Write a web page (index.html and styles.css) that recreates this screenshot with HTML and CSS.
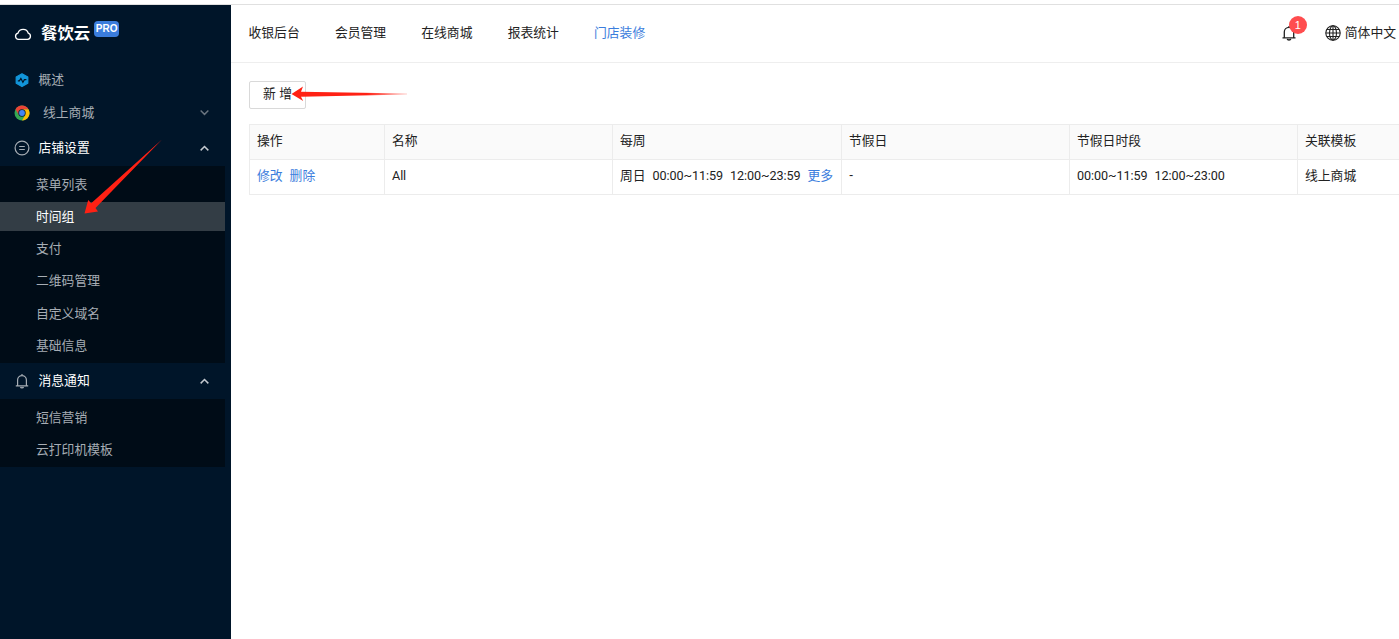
FILE: index.html
```
<!DOCTYPE html>
<html lang="zh-CN">
<head>
  <meta charset="UTF-8">
  <title>餐饮云</title>
  <link rel="stylesheet" href="styles.css">
</head>
<body>
  <div class="layout">
    <aside class="sidebar">
      <div class="brand">
        <svg class="brand-icon" viewBox="0 0 18 14"><path d="M4.600 12.400h9a3.200 3.200 0 0 0 .7-6.200A5.400 5.400 0 0 0 4 6.100a3.200 3.200 0 0 0 .6 6.300z" fill="none" stroke="#fff" stroke-width="1.300"/></svg>
        <span class="brand-name">餐饮云</span>
        <span class="brand-tag">PRO</span>
      </div>
      <nav class="menu">
        <div class="menu-item overview">
          <svg class="menu-icon" viewBox="0 0 16 16"><path d="M8 1.800 13.800 5v6.200L8 14.600 2.200 11.200V5z" fill="#1296db" stroke="#1296db" stroke-width="1.200" stroke-linejoin="round"/><path d="M3.800 8.800h1.600l1.500-2.400 2 3.800 1.500-2.600h2" fill="none" stroke="#001529" stroke-width="1.200"/></svg>
          <span>概述</span>
        </div>
        <div class="menu-item mall">
          <svg class="menu-icon" viewBox="0 0 16 16"><circle cx="8" cy="8" r="7.500" fill="#34a853"/><path d="M8 4.250h6.500A7.500 7.500 0 0 1 8 15.500L11.250 9.900z" fill="#fbbc05"/><path d="M8 4.250h6.500a7.500 7.500 0 0 0-13 0L4.750 9.900z" fill="#ea4335"/><circle cx="8" cy="8" r="3.700" fill="#0b1f30"/><circle cx="8" cy="8" r="2.900" fill="#4285f4"/></svg>
          <span>线上商城</span>
          <svg class="caret dim" viewBox="0 0 10 10"><path d="M1.500 3.200 5 6.700l3.500-3.500"/></svg>
        </div>
        <div class="menu-item open">
          <svg class="menu-icon" viewBox="0 0 16 16"><g fill="none" stroke="#a6adb4"><circle cx="8" cy="8" r="6.900" stroke-width="1.200"/><path d="M5.200 6.500h5.600M5.200 9.500h5.600" stroke-width="1.100"/></g></svg>
          <span>店铺设置</span>
          <svg class="caret" viewBox="0 0 10 10"><path d="M1.500 6.700 5 3.200l3.500 3.500"/></svg>
        </div>
        <ul class="submenu">
          <li>菜单列表</li>
          <li class="active">时间组</li>
          <li>支付</li>
          <li>二维码管理</li>
          <li>自定义域名</li>
          <li>基础信息</li>
        </ul>
        <div class="menu-item open">
          <svg class="menu-icon" viewBox="0 0 16 16"><path d="M1.800 12.900h12.400M3.600 12.900V7a4.400 4.400 0 0 1 8.800 0v5.900M8 2.600V1M6.500 14c.3 1.200 2.700 1.200 3 0" fill="none" stroke="#a6adb4" stroke-width="1.200"/></svg>
          <span>消息通知</span>
          <svg class="caret" viewBox="0 0 10 10"><path d="M1.500 6.700 5 3.200l3.500 3.500"/></svg>
        </div>
        <ul class="submenu">
          <li>短信营销</li>
          <li>云打印机模板</li>
        </ul>
      </nav>
    </aside>

    <main class="main">
      <header class="header">
        <nav class="tabs">
          <a>收银后台</a>
          <a>会员管理</a>
          <a>在线商城</a>
          <a>报表统计</a>
          <a class="current">门店装修</a>
        </nav>
        <div class="tools">
          <div class="notice">
            <svg viewBox="0 0 16 16"><path d="M1.500 12.900h13M3.300 12.900V7a4.700 4.700 0 0 1 9.400 0v5.900M8 2.600V1M6.200 14c.3 1.300 3.300 1.300 3.600 0" fill="none" stroke="#222" stroke-width="1.300"/></svg>
            <span class="badge">1</span>
          </div>
          <svg class="globe" viewBox="0 0 16 16"><g fill="none" stroke="#222" stroke-width="1.100"><circle cx="8" cy="8" r="7.200"/><ellipse cx="8" cy="8" rx="3.500" ry="7.200"/><path d="M8 .8v14.400M.8 8h14.400M1.800 4.500h12.400M1.800 11.500h12.400"/></g></svg>
          <span class="lang">简体中文</span>
        </div>
      </header>

      <section class="content">
        <button class="add">新 增</button>
        <div class="table">
          <div class="row head">
            <div>操作</div>
            <div>名称</div>
            <div>每周</div>
            <div>节假日</div>
            <div>节假日时段</div>
            <div>关联模板</div>
          </div>
          <div class="row">
            <div><a>修改</a><a>删除</a></div>
            <div><span class="num">All</span></div>
            <div><span>周日</span><span class="num">00:00~11:59</span><span class="num">12:00~23:59</span><a>更多</a></div>
            <div>-</div>
            <div><span class="num">00:00~11:59</span><span class="num">12:00~23:00</span></div>
            <div>线上商城</div>
          </div>
        </div>
      </section>
    </main>
  </div>

  <!-- Guide arrows over the page -->
  <svg class="arrows" viewBox="0 0 1399 639">
    <defs>
      <linearGradient id="fade" x1="290" x2="408" y1="0" y2="0" gradientUnits="userSpaceOnUse">
        <stop offset="0.650" stop-color="#ff2114"/>
        <stop offset="1" stop-color="#ff2114" stop-opacity="0.200"/>
      </linearGradient>
    </defs>
    <path d="M84.500 213.500 88.200 200l3 3.300L162 139.500 95.500 208l2.500 3.400z" fill="#ff2114"/>
    <path d="M291.500 94 303 86.500l-2 5.200 106 1.800v1l-106 2.300 2.200 4.200z" fill="url(#fade)"/>
  </svg>
</body>
</html>
```
FILE: styles.css
```
* {
  box-sizing: border-box;
}
body {
  margin: 0;
  height: 639px;
  overflow: hidden;
  background: #fff;
  color: #222;
  font-family: "Liberation Sans", "Noto Sans CJK SC", sans-serif;
  font-size: 12.8px;
}
.layout {
  display: flex;
  height: 639px;
  padding-top: 4px;
}

/* Sidebar */
.sidebar {
  flex: none;
  width: 231px;
  background: #001529;
  border-top: 1px solid #e0e0e0;
  color: #a6adb4;
}
.brand {
  display: flex;
  align-items: center;
  height: 60px;
  padding: 0 0 4px 14px;
  color: #fff;
}
.brand-icon {
  width: 18px;
  height: 14px;
  margin-top: 2px;
}
.brand-name {
  margin: -3px 0 0 9px;
  font-size: 16.4px;
  font-weight: bold;
}
.brand-tag {
  width: 25px;
  height: 16px;
  margin: -8px 0 0 4px;
  border-radius: 4px;
  background: #3b7ddd;
  font-size: 10px;
  font-weight: bold;
  line-height: 16px;
  text-align: center;
}
.menu {
  width: 225px;
}
.menu-item {
  display: flex;
  align-items: center;
  height: 36px;
  padding: 0 15px 0 14px;
}
.menu-item span {
  margin-bottom: 3px;
}
.menu-item.overview {
  height: 30px;
}
.menu-item.mall {
  height: 35px;
}
.menu-item.mall span {
  margin-left: 13px;
  margin-bottom: 2px;
}
.menu-item.open {
  color: #fff;
}
.menu-icon {
  width: 16px;
  height: 16px;
  margin-right: 8.500px;
}
.menu-item.mall .menu-icon {
  margin-right: 0;
}
.caret {
  width: 11px;
  height: 11px;
  margin-left: auto;
  fill: none;
  stroke: #c5cad0;
  stroke-width: 1.3;
}
.caret.dim {
  stroke: #69747f;
}
.submenu {
  display: flow-root;
  margin: 0;
  padding: 3.500px 0 0;
  list-style: none;
  background: #000c17;
}
.submenu li {
  height: 29px;
  margin-bottom: 3.250px;
  padding-left: 36px;
  line-height: 29px;
}
.submenu .active {
  background: #333d45;
  color: #fff;
}

/* Header */
.main {
  flex: 1;
  min-width: 0;
  overflow: hidden;
  border-top: 1px solid #e0e0e0;
}
.header {
  display: flex;
  justify-content: space-between;
  align-items: center;
  height: 58px;
  padding: 0 3px 2px 17.500px;
  border-bottom: 1px solid #eee;
}
.tabs {
  display: flex;
  gap: 35.200px;
  margin-bottom: 2px;
}
.tabs .current {
  color: #3b7ddd;
}
.tools {
  display: flex;
  align-items: center;
}
.lang {
  margin-bottom: 2px;
}
.notice {
  position: relative;
  width: 16px;
  height: 16px;
  margin-right: 28px;
}
.notice svg {
  display: block;
  width: 16px;
  height: 16px;
}
.badge {
  position: absolute;
  top: -9px;
  left: 8px;
  width: 18px;
  height: 18px;
  border-radius: 9px;
  background: #ff4d4f;
  color: #fff;
  font-size: 11px;
  line-height: 18px;
  text-align: center;
}
.globe {
  width: 16px;
  height: 16px;
  margin-right: 4px;
}

/* Content */
.content {
  padding: 18px 0 0 18px;
}
.add {
  display: block;
  width: 57px;
  height: 28px;
  padding: 0 0 6px;
  border: 1px solid #d9d9d9;
  border-radius: 2px;
  background: #fff;
  color: #222;
  font: inherit;
}
.table {
  margin-top: 15px;
  border: solid #ececec;
  border-width: 1px 0 0 1px;
}
.row {
  display: grid;
  grid-template-columns: 135px 228px 229px 228px 228px 1fr;
  height: 35px;
}
.row > div {
  display: flex;
  align-items: center;
  gap: 7px;
  padding: 0 0 6px 7px;
  border: solid #ececec;
  border-width: 0 1px 1px 0;
  white-space: nowrap;
}
.row > div:last-child {
  border-right: 0;
}
.row.head {
  background: #fafafa;
}
.row a {
  color: #3b7ddd;
}
.num {
  padding-top: 3px;
  font-family: Roboto, sans-serif;
  font-size: 12.600px;
  letter-spacing: -0.08px;
}

.arrows {
  position: absolute;
  top: 0;
  left: 0;
  width: 1399px;
  height: 639px;
  pointer-events: none;
}
```
